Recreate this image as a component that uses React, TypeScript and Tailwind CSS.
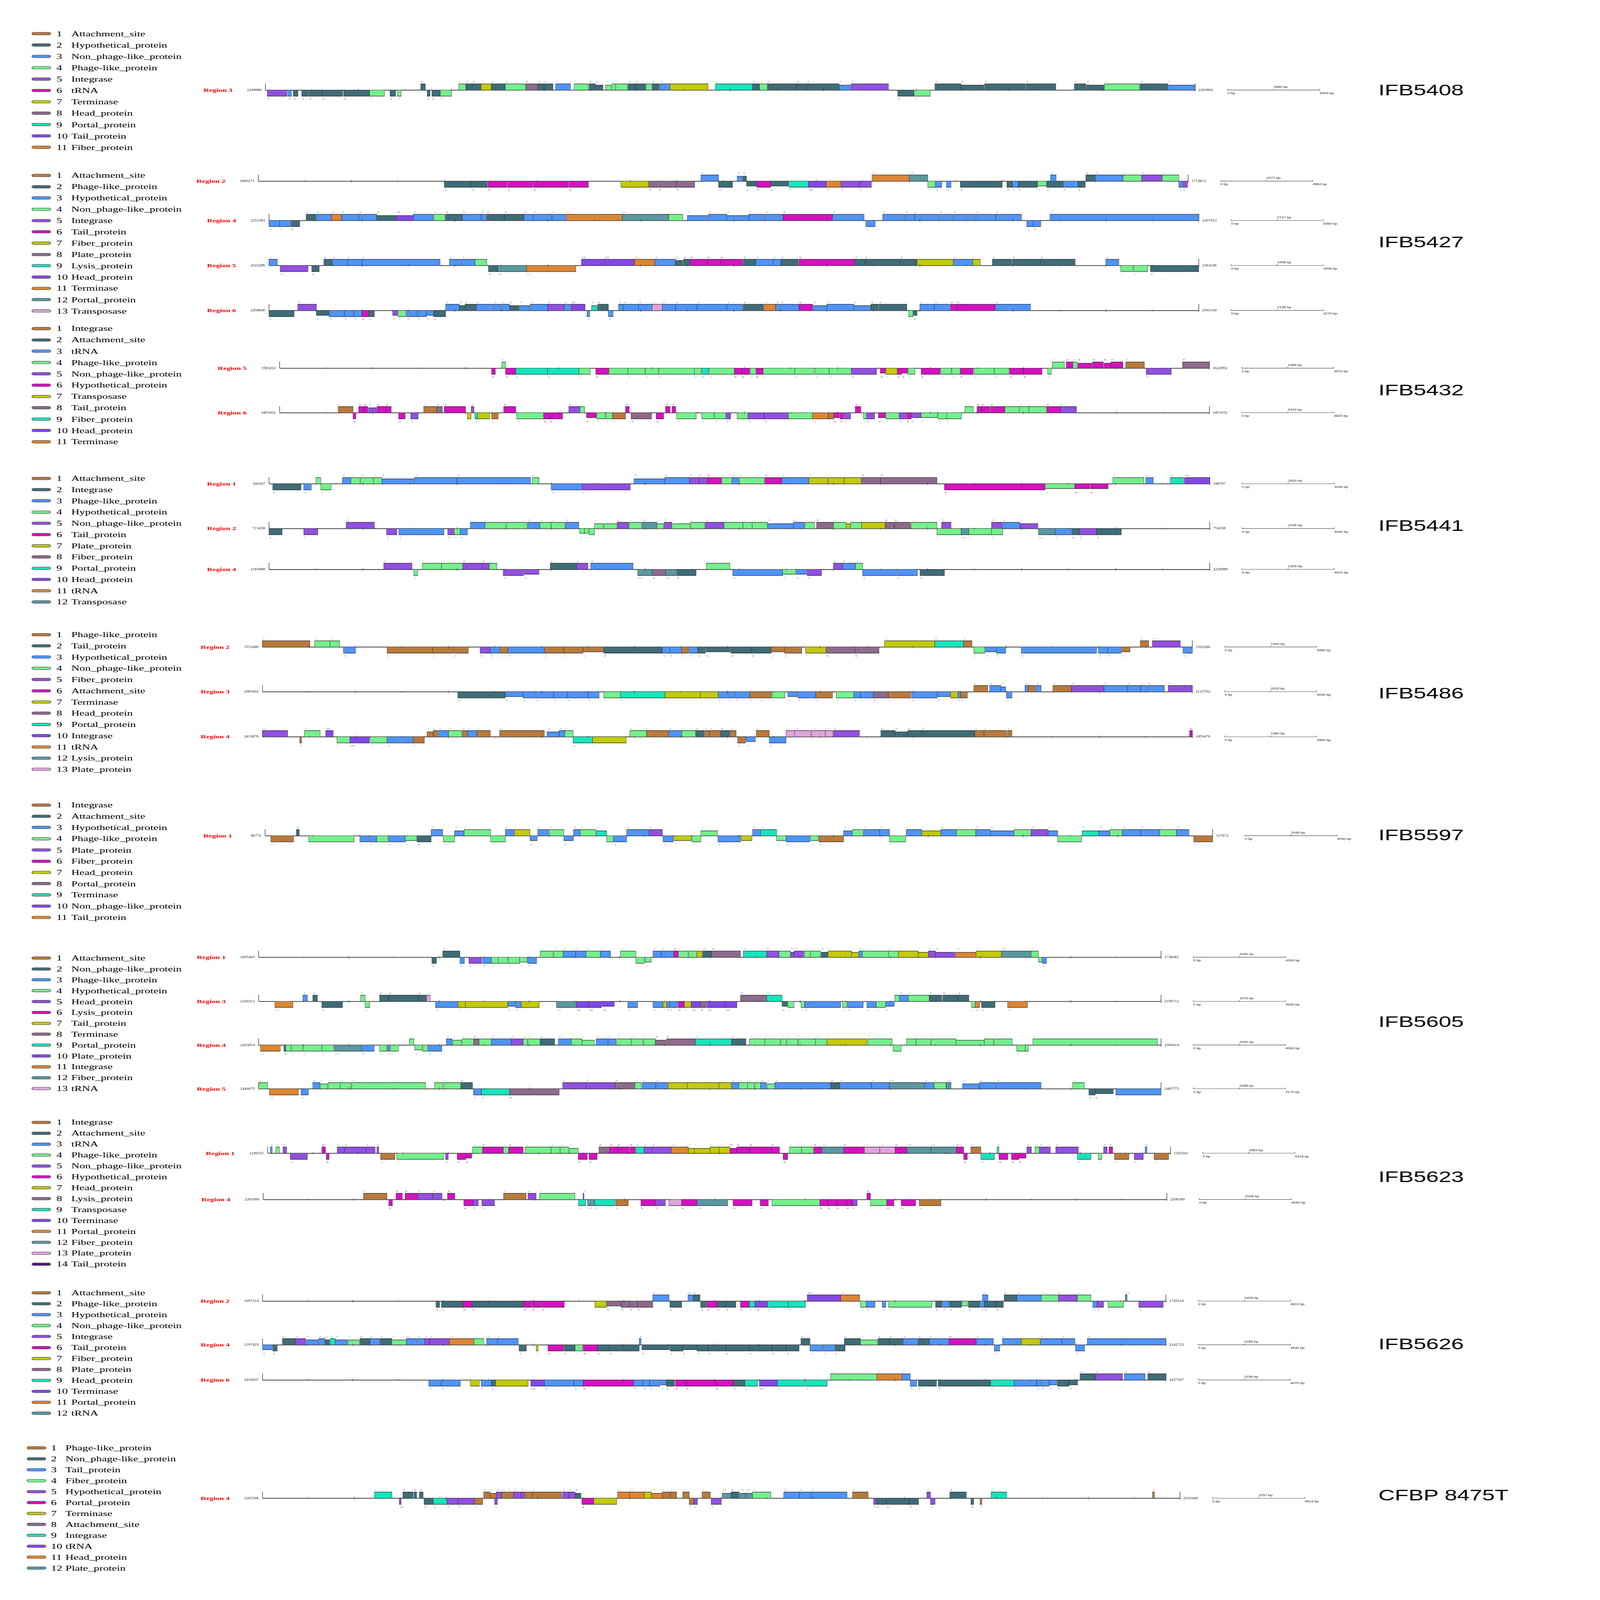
import React from 'react'

// category colours, index = legend number - 1
const HEX = [
  '#b87a3c', '#3f6c78', '#4f94f8', '#74f08c', '#9250e0', '#d412c0', '#c2ca0c',
  '#8e6a8c', '#18e4bc', '#8448e6', '#dc8634', '#5a98a2', '#e0a4dc', '#5a1a78',
]
const SWATCH = [
  'bg-[#b87a3c]', 'bg-[#3f6c78]', 'bg-[#4f94f8]', 'bg-[#74f08c]', 'bg-[#9250e0]', 'bg-[#d412c0]', 'bg-[#c2ca0c]',
  'bg-[#8e6a8c]', 'bg-[#18e4bc]', 'bg-[#8448e6]', 'bg-[#dc8634]', 'bg-[#5a98a2]', 'bg-[#e0a4dc]', 'bg-[#5a1a78]',
]

const SERIF = "'Liberation Serif', 'Times New Roman', serif"
const SANS = "'Liberation Sans', Arial, sans-serif"

// [from, to, strand, what] along the track (0..1).
// what = number: one gene of that category; strand 1 = above the line, 0 = below.
// what = "a,b,c": consecutive genes of those categories; strand = chance of being above.
type Ent = [number, number, number, number | string]

interface Region {
  name: string
  y: number
  s: number
  e: number
  c0: number
  len: number
  genes: Ent[]
}
interface Block {
  id: string
  top: number
  rowClass: string
  alt?: boolean
  nameY: number
  items: string[]
  regions: Region[]
}
interface Gene { x: number; w: number; top: boolean; cat: number; h: number }

const BLOCKS: Block[] = [
  {
    id: 'IFB5408', top: 128, rowClass: 'h-[52px]', nameY: 412,
    items: ['Attachment_site', 'Hypothetical_protein', 'Non_phage-like_protein', 'Phage-like_protein', 'Integrase', 'tRNA', 'Terminase', 'Head_protein', 'Portal_protein', 'Tail_protein', 'Fiber_protein'],
    regions: [
      { name: 'Region 3', y: 412, s: 823, e: 3706, c0: 2240686, len: 53006, genes: [
        [.002, .023, 0, 5], [.024, .028, 0, 3], [.03, .035, 0, 2], [.039, .061, 0, '2,2'], [.061, .083, 0, 2], [.084, .112, 0, 2],
        [.112, .128, 0, 4], [.134, .14, 0, 2], [.142, .146, 0, 4], [.167, .172, 1, 2], [.174, .177, 0, 2], [.179, .188, 0, 2],
        [.188, .2, 0, 4], [.208, .243, 1, '4,2,2,7'], [.243, .258, 1, 2], [.258, .28, 1, 4], [.28, .293, 1, 8], [.293, .31, 1, '2,2'],
        [.312, .328, 1, 3], [.332, .347, 1, 4], [.348, .363, 1, '2,2'], [.366, .39, 1, '4,4,4'], [.39, .435, 1, '2,2,4,2,3'],
        [.435, .476, 1, 7], [.484, .524, 1, 9], [.524, .54, 1, '2,4'], [.54, .63, 1, '2,2,2,3'], [.63, .67, 1, 5],
        [.68, .715, 0, '2,4'], [.72, .85, 1, '2,2,2,2'], [.87, 1, 1, '2,2,4,2,3'],
      ] },
    ],
  },
  {
    id: 'IFB5427', top: 777, rowClass: 'h-[51.7px]', nameY: 1107,
    items: ['Attachment_site', 'Phage-like_protein', 'Hypothetical_protein', 'Non_phage-like_protein', 'Integrase', 'Tail_protein', 'Fiber_protein', 'Plate_protein', 'Lysis_protein', 'Head_protein', 'Terminase', 'Portal_protein', 'Transposase'],
    regions: [
      { name: 'Region 2', y: 829, s: 801, e: 3684, c0: 1669271, len: 45542, genes: [
        [.2, .355, 0, '2,2,6,6,6,6'], [.39, .42, 0, 7], [.42, .47, 0, '8,8,8'], [.476, .495, 1, 3], [.495, .51, 0, 2],
        [.515, .525, 1, '3,2'], [.525, .66, 0, '2,6,2,9,10,11,5,5'], [.66, .70, 1, 11], [.70, .72, 1, 12],
        [.72, .735, 0, '4,3'], [.74, .745, 0, 3], [.755, .80, 0, 2], [.805, .89, 0, '2,3,2,4,2,3,2'], [.852, .858, 1, 3],
        [.89, .9, 1, 2], [.9, .93, 1, 3], [.93, .95, 1, 4], [.95, .972, 1, 5], [.972, .99, 1, 4], [.99, 1, 0, '3,5'],
      ] },
      { name: 'Region 4', y: 1009, s: 834, e: 3717, c0: 2253383, len: 54530, genes: [
        [0, .033, 0, '3,3,2'], [.04, .19, 1, '2,3,11,3,3,2,10,3,4'], [.19, .32, 1, '2,3,3,2,2,3,3,3'], [.32, .38, 1, 11],
        [.38, .43, 1, 12], [.43, .445, 1, 4], [.45, .553, 1, '3,3,3,3,3'], [.553, .606, 1, 6], [.606, .64, 1, 3],
        [.642, .652, 0, 3], [.66, .81, 1, '3,3,3,3,3,3,3'], [.815, .83, 0, '3,3'], [.84, 1, 1, 3],
      ] },
      { name: 'Region 5', y: 1215, s: 834, e: 3717, c0: 2323286, len: 39960, genes: [
        [0, .009, 1, 3], [.012, .042, 0, 5], [.046, .054, 0, 2], [.059, .068, 1, 2], [.068, .1, 1, '3,3'], [.1, .184, 1, 3],
        [.194, .235, 1, '3,3,4'], [.236, .246, 0, 2], [.246, .277, 0, 12], [.277, .33, 0, 11], [.336, .361, 1, 10],
        [.361, .393, 1, 10], [.393, .415, 1, 11], [.415, .453, 1, '3,2,2'], [.453, .51, 1, '6,6,6'], [.51, .57, 1, '2,3,3,2'],
        [.57, .63, 1, 6], [.63, .679, 1, '2,2'], [.679, .697, 1, 2], [.697, .736, 1, 7], [.736, .765, 1, '3,7'],
        [.778, .867, 1, '2,2,2'], [.90, .914, 1, 3], [.916, .945, 0, '4,4'], [.948, 1, 0, 2],
      ] },
      { name: 'Region 6', y: 1421, s: 834, e: 3717, c0: 2458840, len: 42700, genes: [
        [0, .027, 0, 2], [.031, .051, 1, 5], [.051, .114, 0, '2,3,3,3,6,2'], [.133, .19, 0, '5,4,3,3,3,2'],
        [.19, .34, 1, '3,2,2,3,3,3,2,3,3,5,3,10'], [.342, .345, 0, 3], [.347, .365, 1, '9,2'], [.365, .37, 0, 3],
        [.376, .412, 1, '3,3,3'], [.412, .423, 1, 13], [.423, .51, 1, '3,3,3,3'], [.51, .545, 1, '2,11'],
        [.545, .6, 1, '3,3,6,3'], [.6, .686, 1, '3,3,2,2'], [.688, .697, 0, '4,2'], [.70, .733, 1, '3,3'],
        [.733, .74, 1, 6], [.74, .781, 1, 6], [.781, .819, 1, 3],
      ] },
    ],
  },
  {
    id: 'IFB5432', top: 1478, rowClass: 'h-[51.8px]', nameY: 1784,
    items: ['Integrase', 'Attachment_site', 'tRNA', 'Phage-like_protein', 'Non_phage-like_protein', 'Hypothetical_protein', 'Transposase', 'Tail_protein', 'Fiber_protein', 'Head_protein', 'Terminase'],
    regions: [
      { name: 'Region 5', y: 1685, s: 867, e: 3750, c0: 1583202, len: 39700, genes: [
        [.228, .232, 0, 6], [.239, .243, 1, 4], [.243, .254, 0, 6], [.254, .288, 0, 9], [.288, .322, 0, 9], [.322, .334, 0, 4],
        [.34, .354, 0, 6], [.354, .408, 0, '4,4,4'], [.408, .446, 0, 4], [.446, .462, 0, '4,9'], [.462, .489, 0, 4],
        [.489, .52, 0, '6,6,4,6'], [.52, .554, 0, 4], [.554, .575, 0, 4], [.576, .591, 0, 4], [.591, .615, 0, 4],
        [.615, .642, 0, 5], [.646, .684, 0, '6,7,6,6,4'], [.69, .732, 0, '6,4,4'], [.732, .746, 0, 6], [.747, .785, 0, '4,4'],
        [.785, .8, 0, 6], [.8, .82, 0, 6], [.826, .83, 0, 4], [.831, .844, 1, 4], [.846, .894, 1, '6,4,6,6,6'],
        [.894, .907, 1, 6], [.91, .93, 1, 1], [.932, .959, 0, 5], [.971, 1, 1, 8],
      ] },
      { name: 'Region 6', y: 1889, s: 867, e: 3750, c0: 3403452, len: 48200, genes: [
        [.063, .079, 1, 1], [.085, .12, 1, '6,6,5,6,6'], [.079, .082, 0, 6], [.128, .135, 0, 6], [.141, .149, 0, 5],
        [.155, .169, 1, 1], [.169, .175, 1, 8], [.177, .2, 1, 6], [.206, .209, 1, 5], [.202, .206, 0, 7], [.21, .213, 0, 9],
        [.213, .226, 0, 7], [.228, .235, 0, 1], [.241, .254, 1, 6], [.255, .284, 0, 4], [.284, .305, 0, '6,6'],
        [.311, .323, 1, 5], [.323, .328, 1, 4], [.33, .358, 0, '6,4,4'], [.358, .372, 0, 1], [.372, .376, 1, 6],
        [.378, .4, 0, 8], [.405, .413, 0, 6], [.415, .42, 1, 6], [.422, .426, 1, 6], [.427, .448, 0, 4],
        [.454, .485, 0, '4,4,5'], [.492, .521, 0, '4,5'], [.521, .547, 0, 5], [.547, .573, 0, 4], [.573, .59, 0, 11],
        [.59, .596, 0, 1], [.596, .614, 0, '6,6,5'], [.619, .625, 1, 6], [.628, .64, 0, '4,5'], [.644, .69, 0, '6,4,5,6,5'],
        [.69, .734, 0, '4,4,4'], [.737, .746, 1, 4], [.75, .78, 1, '6,6,6'], [.78, .825, 1, '4,4,4'], [.825, .84, 1, 6],
        [.84, .857, 1, 5],
      ] },
    ],
  },
  {
    id: 'IFB5441', top: 2164, rowClass: 'h-[51.4px]', nameY: 2405,
    items: ['Attachment_site', 'Integrase', 'Phage-like_protein', 'Hypothetical_protein', 'Non_phage-like_protein', 'Tail_protein', 'Plate_protein', 'Fiber_protein', 'Portal_protein', 'Head_protein', 'tRNA', 'Transposase'],
    regions: [
      { name: 'Region 1', y: 2214, s: 834, e: 3751, c0: 166307, len: 32400, genes: [
        [.004, .034, 0, 2], [.037, .045, 0, 3], [.05, .055, 1, 4], [.055, .066, 0, 4], [.078, .12, 1, '3,4,4,4'],
        [.12, .2, 1, '3,3'], [.2, .278, 1, 3], [.28, .287, 1, 4], [.30, .333, 0, 3], [.333, .384, 0, 5], [.388, .447, 1, '3,3'],
        [.447, .5, 1, '5,5,6,4,3'], [.5, .574, 1, '4,6,3'], [.574, .63, 1, '7,7,7'], [.63, .65, 1, 8], [.65, .71, 1, 8],
        [.718, .825, 0, 6], [.825, .892, 0, '4,6,6'], [.897, .93, 1, 4], [.932, .94, 1, 3], [.958, .972, 1, 9], [.973, 1, 1, 10],
      ] },
      { name: 'Region 2', y: 2419, s: 834, e: 3751, c0: 713458, len: 40900, genes: [
        [0, .014, 0, 2], [.037, .052, 0, 5], [.082, .112, 1, 5], [.125, .136, 0, 5], [.138, .186, 0, 3], [.19, .211, 0, '5,4,3'],
        [.214, .33, 1, '3,4,4,3,4,4,3'], [.33, .346, 0, '4,4,4'], [.346, .42, 1, '4,4,5,4,12,4'], [.42, .53, 1, '5,4,4,5,4,4,4'],
        [.53, .58, 1, '3,3,4'], [.582, .6, 1, 8], [.6, .63, 1, '4,7,4'], [.63, .655, 1, 7], [.655, .71, 1, '8,8,4'],
        [.71, .78, 0, '4,12,4,4'], [.715, .725, 1, 5], [.768, .818, 1, '5,3,5'], [.818, .906, 0, '12,3,2,5,2'],
      ] },
      { name: 'Region 4', y: 2606, s: 834, e: 3751, c0: 2183888, len: 46100, genes: [
        [.122, .152, 1, 5], [.154, .158, 0, 4], [.163, .243, 1, '4,4,5,5,4'], [.249, .287, 0, '5,5'], [.299, .327, 1, 2],
        [.327, .339, 1, 5], [.342, .387, 1, 3], [.392, .454, 0, '12,8,12,2'], [.465, .49, 1, 4], [.493, .546, 0, 3],
        [.546, .588, 0, '4,3,5'], [.6, .631, 1, '5,3,4'], [.631, .69, 0, '3,3'], [.692, .718, 0, 2],
      ] },
    ],
  },
  {
    id: 'IFB5486', top: 2879, rowClass: 'h-[51.4px]', nameY: 3171,
    items: ['Phage-like_protein', 'Tail_protein', 'Hypothetical_protein', 'Non_phage-like_protein', 'Fiber_protein', 'Attachment_site', 'Terminase', 'Head_protein', 'Portal_protein', 'Integrase', 'tRNA', 'Lysis_protein', 'Plate_protein'],
    regions: [
      { name: 'Region 2', y: 2961, s: 814, e: 3697, c0: 1553480, len: 39800, genes: [
        [0, .051, 1, 1], [.056, .083, 1, '4,4'], [.087, .1, 0, 3], [.134, .183, 0, 1], [.183, .222, 0, '1,1'], [.234, .245, 0, 5],
        [.245, .264, 0, '3,1'], [.264, .303, 0, 3], [.303, .367, 0, '1,1,1'], [.367, .43, 0, 2], [.43, .477, 0, '3,3,1,3,2'],
        [.477, .526, 0, '2,2'], [.526, .547, 0, 2], [.547, .58, 0, '1,1'], [.584, .606, 0, 7], [.606, .637, 0, 8],
        [.637, .663, 0, 8], [.669, .723, 1, 7], [.723, .754, 1, 9], [.754, .763, 1, 1], [.765, .8, 0, '4,3,3'],
        [.816, .897, 0, 3], [.899, .933, 0, '3,3,1'], [.944, .953, 1, 1], [.957, .987, 1, 5], [.99, 1, 0, 3],
      ] },
      { name: 'Region 3', y: 3166, s: 814, e: 3697, c0: 2085402, len: 40300, genes: [
        [.21, .261, 0, 2], [.261, .362, 0, '3,3,3,3,3,3'], [.367, .385, 0, 4], [.385, .433, 0, 9], [.433, .471, 0, 7],
        [.471, .49, 0, 7], [.49, .535, 0, '3,3,3,1'], [.535, .562, 0, '1,4'], [.565, .595, 0, '3,3'], [.595, .613, 0, 1],
        [.617, .636, 0, 4], [.636, .657, 0, '3,3'], [.657, .673, 0, 8], [.673, .697, 0, 1], [.698, .74, 0, '3,3'],
        [.74, .758, 0, '7,3,1'], [.765, .78, 1, 1], [.782, .8, 1, '3,3'], [.8, .806, 0, 3], [.82, .838, 1, '3,1,3'],
        [.85, .87, 1, 1], [.87, .905, 1, 5], [.905, .93, 1, 3], [.93, .97, 1, '3,3,3'], [.974, 1, 1, 5],
      ] },
      { name: 'Region 4', y: 3372, s: 814, e: 3697, c0: 2419876, len: 39600, genes: [
        [0, .027, 1, 5], [.04, .042, 0, 1], [.045, .062, 1, 4], [.068, .076, 1, 10], [.08, .094, 0, 4], [.094, .115, 0, 10],
        [.116, .134, 0, 4], [.134, .162, 0, 3], [.162, .174, 0, 1], [.177, .2, 1, '1,1,3'], [.2, .245, 1, '4,1,3,1'],
        [.255, .303, 1, 1], [.306, .334, 1, '3,3,4'], [.334, .355, 0, 9], [.355, .391, 0, 7], [.395, .413, 1, 4],
        [.413, .437, 1, 1], [.437, .451, 1, 3], [.451, .51, 1, '4,2,1,1,2,1'], [.511, .53, 0, '1,3'], [.545, .563, 0, 3],
        [.531, .545, 1, 1], [.563, .614, 1, '13,13,13,13'], [.614, .642, 1, 5], [.665, .709, 1, '2,2,2'], [.709, .766, 1, 2],
        [.766, .776, 1, 1], [.776, .8, 1, 1], [.801, .806, 1, 1], [.997, 1, 1, 6],
      ] },
    ],
  },
  {
    id: 'IFB5597', top: 3659, rowClass: 'h-[51.4px]', nameY: 3820,
    items: ['Integrase', 'Attachment_site', 'Hypothetical_protein', 'Phage-like_protein', 'Plate_protein', 'Fiber_protein', 'Head_protein', 'Portal_protein', 'Terminase', 'Non_phage-like_protein', 'Tail_protein'],
    regions: [
      { name: 'Region 1', y: 3825, s: 822, e: 3760, c0: 86772, len: 40900, genes: [
        [.006, .03, 0, 1], [.033, .036, 1, 2], [.046, .094, 0, 4], [.1, .2, 0.3, '3,3,4,3,4,2,3,4'], [.2, .3, 0.4, '3,4,4,3,7,3,3'],
        [.3, .42, 0.5, '4,3,3,4,9,4,3,3,5'], [.42, .55, 0.6, '3,7,4,4,3,7,3,9,4'], [.55, .62, 0.2, '3,4,1,3'],
        [.62, .75, 0.85, '4,3,3,4,3,7,3,4'], [.75, .88, 0.8, '3,3,4,5,3,4,9'], [.88, .975, 0.8, '3,4,3,3,4,3'], [.98, 1, 0, 1],
      ] },
    ],
  },
  {
    id: 'IFB5605', top: 4360, rowClass: 'h-[49.8px]', nameY: 4675,
    items: ['Attachment_site', 'Non_phage-like_protein', 'Phage-like_protein', 'Hypothetical_protein', 'Head_protein', 'Lysis_protein', 'Tail_protein', 'Terminase', 'Portal_protein', 'Plate_protein', 'Integrase', 'Fiber_protein', 'tRNA'],
    regions: [
      { name: 'Region 1', y: 4381, s: 802, e: 3600, c0: 1695465, len: 43000, genes: [
        [.192, .197, 0, 2], [.204, .223, 1, 2], [.223, .228, 0, 3], [.233, .247, 0, 5], [.248, .298, 0, '3,4,4,4,4'],
        [.298, .308, 0, 3], [.312, .39, 1, '4,4,3,3,4,3'], [.401, .418, 1, 4], [.418, .435, 0, '4,4'], [.437, .46, 1, '3,3'],
        [.46, .486, 1, '6,4,4'], [.486, .502, 1, '7,2'], [.502, .534, 1, 8], [.537, .563, 1, 9], [.563, .631, 1, '5,4,5,5,4,4,2'],
        [.631, .657, 1, 7], [.657, .669, 1, '7,3'], [.669, .698, 1, 4], [.698, .709, 1, 4], [.709, .731, 1, 7],
        [.731, .75, 1, '7,5'], [.75, .795, 1, '5,11'], [.795, .823, 1, 7], [.823, .856, 1, 12], [.856, .864, 1, 4],
        [.864, .873, 0, '4,3'],
      ] },
      { name: 'Region 3', y: 4583, s: 802, e: 3600, c0: 2160312, len: 39400, genes: [
        [.018, .038, 0, 11], [.049, .054, 1, 3], [.06, .065, 1, 2], [.07, .093, 0, 2], [.113, .118, 1, 4], [.118, .123, 0, 4],
        [.134, .144, 1, 2], [.144, .177, 1, 2], [.177, .186, 1, 2], [.186, .19, 1, 13], [.196, .221, 0, 3], [.221, .229, 0, 7],
        [.229, .276, 0, 7], [.276, .291, 0, '3,3'], [.291, .311, 0, 7], [.33, .352, 0, 12], [.352, .394, 0, '10,10,10'],
        [.409, .42, 0, 3], [.437, .497, 0, '3,7,3,3,6,7,10,8'], [.497, .517, 0, 10], [.517, .53, 0, 10], [.534, .563, 1, 8],
        [.563, .58, 1, 9], [.58, .594, 0, '2,4'], [.601, .605, 0, 4], [.605, .645, 0, 3], [.647, .67, 0, '4,3'],
        [.674, .705, 0, '3,4,3'], [.705, .71, 1, 4], [.71, .72, 1, 3], [.72, .743, 1, 4], [.743, .757, 1, 2],
        [.758, .775, 1, 2], [.775, .787, 1, 2], [.79, .794, 0, 4], [.794, .799, 0, 11], [.801, .816, 0, 2], [.83, .852, 0, 11],
      ] },
      { name: 'Region 4', y: 4783, s: 802, e: 3600, c0: 2263814, len: 40600, genes: [
        [.002, .024, 0, 11], [.028, .03, 0, 2], [.03, .084, 0, '4,4,4,4'], [.084, .114, 0, 12], [.114, .128, 0, 3],
        [.134, .155, 0, '4,3,4'], [.167, .172, 1, 4], [.173, .188, 0, '4,4'], [.188, .203, 0, 3], [.208, .258, 1, '3,4,4,8,4'],
        [.258, .28, 1, 3], [.28, .293, 1, 5], [.293, .312, 1, '4,4'], [.312, .328, 1, 2], [.332, .372, 1, '3,4,4'],
        [.374, .396, 1, '3,3'], [.397, .452, 1, '4,4,4,8'], [.452, .484, 1, 8], [.484, .524, 1, 9], [.524, .54, 1, 2],
        [.544, .63, 1, '4,4,4,4,4,4'], [.63, .674, 1, 7], [.675, .702, 1, 4], [.703, .712, 0, 4], [.718, .815, 1, '4,4,4,4,4'],
        [.815, .835, 1, 4], [.84, .853, 0, '4,4'], [.858, .996, 1, 4],
      ] },
      { name: 'Region 5', y: 4983, s: 802, e: 3600, c0: 2444075, len: 41700, genes: [
        [0, .01, 1, 4], [.012, .044, 0, 11], [.047, .055, 0, 3], [.06, .068, 1, 3], [.068, .103, 1, '4,4,4'], [.103, .185, 1, 4],
        [.195, .204, 1, 4], [.205, .224, 1, 4], [.224, .237, 1, 2], [.238, .247, 0, 3], [.247, .278, 0, 9], [.278, .333, 0, 8],
        [.337, .363, 1, 5], [.363, .395, 1, 5], [.395, .417, 1, 8], [.417, .424, 1, 4], [.425, .454, 1, '3,3'], [.454, .475, 1, 7],
        [.475, .51, 1, 7], [.51, .524, 1, 7], [.524, .572, 1, '3,4,4,4,3,4'], [.572, .634, 1, 3], [.634, .644, 1, 2],
        [.644, .679, 1, 3], [.679, .699, 1, 3], [.699, .738, 1, 12], [.738, .768, 1, '3,4,12'], [.78, .818, 1, '3,3'],
        [.818, .867, 1, 3], [.902, .915, 1, 4], [.92, .947, 0, '2,2'], [.95, 1, 0, 3],
      ] },
    ],
  },
  {
    id: 'IFB5623', top: 5112, rowClass: 'h-[49.9px]', nameY: 5385,
    items: ['Integrase', 'Attachment_site', 'tRNA', 'Phage-like_protein', 'Non_phage-like_protein', 'Hypothetical_protein', 'Head_protein', 'Lysis_protein', 'Transposase', 'Terminase', 'Portal_protein', 'Fiber_protein', 'Plate_protein', 'Tail_protein'],
    regions: [
      { name: 'Region 1', y: 5278, s: 830, e: 3629, c0: 1249331, len: 53170, genes: [
        [.003, .005, 1, 3], [.009, .013, 1, 4], [.017, .021, 1, 5], [.025, .044, 0, 5], [.06, .064, 1, 6], [.065, .068, 0, 6],
        [.077, .085, 1, 5], [.085, .109, 1, 5], [.109, .119, 1, 5], [.121, .123, 1, 5], [.125, .141, 0, 1], [.143, .195, 0, 4],
        [.197, .2, 0, 5], [.21, .226, 0, '6,6'], [.227, .238, 1, 4], [.238, .261, 1, 6], [.261, .267, 1, 4], [.267, .283, 1, 6],
        [.285, .314, 1, 4], [.314, .344, 1, '4,4,4'], [.344, .354, 0, 6], [.356, .365, 0, 6], [.367, .379, 1, 8],
        [.379, .408, 1, '6,6,6'], [.408, .417, 1, 9], [.417, .426, 1, 5], [.426, .447, 1, 5], [.447, .466, 1, 11],
        [.466, .5, 1, '7,7,7'], [.5, .512, 1, 7], [.512, .534, 1, '6,6'], [.534, .558, 1, 6], [.558, .567, 1, 6],
        [.571, .576, 0, 6], [.578, .605, 1, '4,4'], [.605, .614, 1, 6], [.614, .638, 1, 12], [.638, .661, 1, 6],
        [.661, .678, 1, 13], [.678, .695, 1, 13], [.695, .708, 1, 6], [.708, .735, 1, 12], [.735, .763, 1, 12],
        [.763, .771, 1, 6], [.771, .775, 0, 6], [.779, .79, 1, 1], [.79, .805, 0, 9], [.808, .81, 1, 9], [.81, .82, 0, 6],
        [.824, .84, 0, '6,6'], [.841, .846, 1, 5], [.85, .855, 1, 4], [.855, .867, 1, 5], [.873, .898, 1, 5],
        [.897, .912, 0, 9], [.92, .924, 0, 4], [.926, .93, 1, 5], [.932, .936, 1, 6], [.938, .954, 0, 1], [.96, .97, 0, 5],
        [.972, .974, 1, 3], [.982, .998, 0, 1],
      ] },
      { name: 'Region 4', y: 5490, s: 816, e: 3618, c0: 2265490, len: 40900, genes: [
        [.111, .137, 1, 1], [.139, .143, 0, 6], [.147, .154, 1, 6], [.157, .171, 1, 6], [.171, .188, 1, 5], [.188, .198, 1, 5],
        [.204, .212, 1, 6], [.222, .232, 0, 6], [.232, .238, 0, 5], [.242, .256, 0, 5], [.266, .291, 1, 1], [.293, .302, 1, 5],
        [.306, .345, 1, 4], [.354, .355, 1, 5], [.349, .357, 0, 9], [.359, .367, 0, 12], [.367, .389, 0, 9], [.39, .404, 0, 1],
        [.418, .434, 0, 6], [.434, .445, 0, 5], [.449, .463, 0, 13], [.463, .48, 0, 6], [.48, .514, 0, 12], [.52, .541, 0, 6],
        [.55, .559, 0, 6], [.563, .616, 0, 4], [.616, .658, 0, '6,6,6,6,5'], [.668, .672, 1, 6], [.672, .69, 0, 4],
        [.69, .698, 0, 6], [.706, .722, 0, 6], [.726, .75, 0, 1],
      ] },
    ],
  },
  {
    id: 'IFB5626', top: 5892, rowClass: 'h-[50.1px]', nameY: 6150,
    items: ['Attachment_site', 'Phage-like_protein', 'Hypothetical_protein', 'Non_phage-like_protein', 'Integrase', 'Tail_protein', 'Fiber_protein', 'Plate_protein', 'Head_protein', 'Terminase', 'Portal_protein', 'tRNA'],
    regions: [
      { name: 'Region 2', y: 5955, s: 814, e: 3615, c0: 1697214, len: 48100, genes: [
        [.192, .196, 0, 2], [.198, .222, 0, 2], [.222, .232, 0, 6], [.232, .289, 0, 2], [.289, .309, 0, '6,6'], [.309, .334, 0, 6],
        [.368, .381, 0, 7], [.381, .432, 0, '8,8,8,8'], [.432, .45, 1, 3], [.451, .464, 0, 2], [.471, .485, 1, '3,2'],
        [.485, .524, 0, '2,6,2,2'], [.529, .545, 0, '6,9'], [.545, .559, 0, 10], [.559, .582, 0, 9], [.582, .601, 0, 9],
        [.603, .64, 1, 10], [.64, .661, 1, 11], [.662, .678, 0, '4,3'], [.686, .69, 0, 3], [.693, .741, 0, 4],
        [.745, .82, 0, '2,3,2,4,2,3,2,2'], [.797, .803, 1, 3], [.821, .835, 1, 2], [.835, .862, 1, 3], [.862, .881, 1, 4],
        [.881, .902, 1, 5], [.902, .917, 1, 4], [.955, .957, 1, 12], [.919, .931, 0, '3,5'], [.936, .953, 0, 4], [.97, .997, 0, 5],
      ] },
      { name: 'Region 4', y: 6155, s: 814, e: 3615, c0: 2197423, len: 45300, genes: [
        [0, .017, 0, '3,2'], [.022, .075, 1, '2,5,3,3,2'], [.075, .13, 1, '9,3,4,2,3'], [.13, .185, 1, '2,4,3,3,5'],
        [.185, .207, 1, 5], [.207, .234, 1, 11], [.234, .245, 1, 4], [.248, .26, 1, 3], [.26, .283, 1, 3], [.284, .292, 0, 2],
        [.303, .305, 0, 7], [.316, .355, 0, '6,2,4'], [.355, .371, 0, 6], [.371, .384, 0, 2], [.384, .417, 0, 2],
        [.42, .58, 0, '2,2,2,2,2,2,2,2'], [.58, .594, 0, 2], [.417, .419, 1, 3], [.596, .606, 1, 2], [.606, .645, 0, '3,3,2'],
        [.644, .694, 1, '2,4,2'], [.694, .709, 1, 2], [.709, .726, 1, 3], [.726, .738, 1, 2], [.738, .76, 1, 3], [.76, .79, 1, 6],
        [.79, .809, 1, 3], [.81, .816, 0, 3], [.819, .84, 1, 3], [.84, .861, 1, 7], [.861, .9, 1, '3,3'], [.9, .91, 0, 3],
        [.913, 1, 1, 3],
      ] },
      { name: 'Region 6', y: 6316, s: 814, e: 3615, c0: 2416697, len: 40700, genes: [
        [.184, .198, 0, 3], [.198, .219, 0, 3], [.23, .24, 0, 7], [.242, .258, 0, '3,2'], [.258, .294, 0, 7], [.297, .312, 0, 10],
        [.312, .345, 0, 3], [.345, .355, 0, 3], [.355, .411, 0, 6], [.411, .447, 0, '3,3,3,3'], [.447, .456, 0, 2],
        [.457, .469, 0, 6], [.469, .502, 0, 6], [.502, .521, 0, 6], [.521, .534, 0, 2], [.534, .548, 0, 9], [.55, .57, 0, 10],
        [.57, .6, 0, 9], [.601, .625, 0, 9], [.629, .68, 1, 4], [.68, .708, 1, 11], [.708, .717, 1, 3], [.717, .724, 0, 3],
        [.726, .746, 0, 2], [.748, .806, 0, 2], [.806, .832, 0, 9], [.832, .857, 0, 3], [.857, .88, 0, '3,3,3'],
        [.88, .903, 0, '2,2'], [.905, .922, 1, 2], [.922, .952, 1, 5], [.954, .977, 1, 3], [.98, 1, 1, 2],
      ] },
    ],
  },
  {
    id: 'CFBP 8475T', top: 6602, rowClass: 'h-[50px]', alt: true, nameY: 6842,
    items: ['Phage-like_protein', 'Non_phage-like_protein', 'Tail_protein', 'Fiber_protein', 'Hypothetical_protein', 'Portal_protein', 'Terminase', 'Attachment_site', 'Integrase', 'tRNA', 'Head_protein', 'Plate_protein'],
    regions: [
      { name: 'Region 4', y: 6857, s: 814, e: 3659, c0: 2265306, len: 45140, genes: [
        [.122, .141, 1, 9], [.149, .151, 0, 10], [.153, .164, 1, 2], [.165, .168, 1, 2], [.171, .175, 1, 2], [.176, .186, 0, 2],
        [.186, .201, 0, 9], [.201, .213, 0, 5], [.213, .231, 0, 5], [.231, .24, 0, 1], [.241, .248, 1, 1],
        [.248, .294, 1, '1,5,1,1,5,5,1'], [.253, .256, 0, 5], [.294, .326, 1, 1], [.327, .347, 1, '5,5,2'], [.348, .361, 0, 6],
        [.361, .386, 0, 7], [.387, .4, 1, 11], [.4, .416, 1, 11], [.416, .452, 1, '7,11,1,1'], [.458, .465, 1, 1],
        [.479, .488, 1, 1], [.465, .47, 0, 1], [.47, .474, 0, 5], [.489, .5, 0, 5], [.501, .534, 1, '12,2,12,12'],
        [.534, .554, 1, 4], [.568, .585, 1, 3], [.585, .598, 1, 3], [.598, .637, 1, 3], [.643, .66, 1, 1], [.666, .669, 0, 5],
        [.669, .68, 0, 2], [.68, .705, 0, 2], [.705, .715, 0, 2], [.724, .728, 1, 5], [.728, .733, 0, 5], [.749, .767, 1, 2],
        [.772, .775, 0, 2], [.782, .784, 0, 1], [.794, .811, 1, 9], [.97, .972, 1, 1],
      ] },
    ],
  },
]

function mulberry32(a: number) {
  return () => {
    a |= 0
    a = (a + 0x6d2b79f5) | 0
    let t = Math.imul(a ^ (a >>> 15), 1 | a)
    t = (t + Math.imul(t ^ (t >>> 7), 61 | t)) ^ t
    return ((t ^ (t >>> 14)) >>> 0) / 4294967296
  }
}

function buildGenes(r: Region): Gene[] {
  const rnd = mulberry32(r.c0)
  const W = r.e - r.s
  const out: Gene[] = []
  for (const [a, b, p, what] of r.genes) {
    const x0 = r.s + a * W
    const x1 = r.s + b * W
    if (typeof what === 'number') {
      out.push({ x: x0, w: Math.max(x1 - x0, 2), top: p >= 0.5, cat: what, h: 29 })
      continue
    }
    const cats = what.split(',').map(Number)
    const parts = cats.map(() => 0.35 + rnd())
    const sum = parts.reduce((s, v) => s + v, 0)
    let x = x0
    cats.forEach((cat, i) => {
      const w = ((x1 - x0) * parts[i]) / sum
      const top = p === 1 ? true : p === 0 ? false : rnd() < p
      out.push({ x, w: Math.max(w - (rnd() < 0.35 ? 2 : 0), 2), top, cat, h: rnd() < 0.2 ? 23 : 29 })
      x += w
    })
  }
  return out
}

function Track({ r, top }: { r: Region; top: number }) {
  const Y = r.y - top
  const W = r.e - r.s
  const genes = buildGenes(r)
  const sb = r.e + 100
  const half = Math.round(r.len / 20)
  return (
    <g>
      <text x={r.s - 102} y={Y} textAnchor="end" dominantBaseline="central" fontFamily={SERIF} fontWeight={700} fontSize={24} fill="#ff0000">
        {r.name}
      </text>
      <text x={r.s - 12} y={Y} textAnchor="end" dominantBaseline="central" fontFamily={SERIF} fontSize={13} fill="#222">
        {r.c0}
      </text>
      <rect x={r.s} y={Y - 1} width={W} height={4} fill="#9a9a9a" />
      <line x1={r.s} x2={r.e} y1={Y} y2={Y} stroke="#111" strokeWidth={1.8} />
      <line x1={r.s} x2={r.s} y1={Y - 30} y2={Y} stroke="#222" strokeWidth={1.5} />
      <line x1={r.e} x2={r.e} y1={Y - 30} y2={Y + 6} stroke="#222" strokeWidth={1.5} />
      <text x={r.e + 10} y={Y} dominantBaseline="central" fontFamily={SERIF} fontSize={13} fill="#222">
        {r.c0 + r.len}
      </text>

      {genes.map((g, i) => {
        const y0 = g.top ? Y - g.h : Y
        return (
          <g key={i}>
            <rect x={g.x} y={y0} width={g.w} height={g.h} fill={HEX[g.cat - 1]} stroke="#2a2a2a" strokeOpacity={0.75} strokeWidth={1.2} />
            <rect x={g.x} y={g.top ? y0 : Y + g.h - 3} width={g.w} height={3} fill="#333" opacity={0.55} />
            <text x={g.x + 1} y={g.top ? Y - 34 : Y + 44} fontFamily={SERIF} fontSize={12} fill={HEX[g.cat - 1]}>
              {g.cat}
            </text>
          </g>
        )
      })}

      {Array.from({ length: 19 }, (_, i) => {
        const x = r.s + ((i + 1) * W) / 20
        const d = i % 2 ? 7 : 4
        return <line key={i} x1={x} x2={x} y1={Y - d} y2={Y + d} stroke="#333" strokeWidth={1.2} />
      })}

      {/* scale bar */}
      <line x1={sb} x2={sb + 286} y1={Y} y2={Y} stroke="#222" strokeWidth={1.6} />
      <line x1={sb} x2={sb} y1={Y - 5} y2={Y} stroke="#222" strokeWidth={1.4} />
      <line x1={sb + 143} x2={sb + 143} y1={Y - 5} y2={Y} stroke="#222" strokeWidth={1.4} />
      <line x1={sb + 286} x2={sb + 286} y1={Y - 5} y2={Y} stroke="#222" strokeWidth={1.4} />
      <text x={sb + 143} y={Y - 10} fontFamily={SANS} fontSize={12} fill="#222">{half} bp</text>
      <text x={sb} y={Y + 19} fontFamily={SANS} fontSize={12} fill="#222">0 bp</text>
      <text x={sb + 286} y={Y + 19} fontFamily={SANS} fontSize={12} fill="#222">{half * 2} bp</text>
    </g>
  )
}

function Legend({ b }: { b: Block }) {
  return (
    <div className="w-[580px] shrink-0">
      {b.items.map((t, i) => (
        <div key={t} className={`flex items-center ${b.rowClass}`}>
          <span className={`${b.alt ? 'ml-[83px]' : 'ml-[98px]'} h-[14px] w-[60px] shrink-0 rounded-full border-2 border-[#4d4d4d] ${SWATCH[i]}`} />
          <span className={`${b.alt ? 'ml-[15px] w-[45px]' : 'ml-[17px] w-[46px]'} shrink-0 text-[35px] leading-none`}>{i + 1}</span>
          <span className="whitespace-nowrap text-[35px] leading-none">{t}</span>
        </div>
      ))}
    </div>
  )
}

export default function App() {
  // the figure is laid out on a 4961 x 7323 sheet; stretch that sheet onto the actual window
  const sx = window.innerWidth / 4961
  const sy = window.innerHeight / 7323
  return (
    <div className="h-screen w-screen overflow-hidden bg-white">
      <div
        style={{ transform: `scale(${sx}, ${sy})` }}
        className="h-[7323px] w-[4961px] origin-top-left bg-white pt-[128px] font-['Liberation_Serif','Times_New_Roman',serif] text-black"
      >
        {BLOCKS.map((b, bi) => {
          const next = bi + 1 < BLOCKS.length ? BLOCKS[bi + 1].top : 7323
          const h = next - b.top
          return (
            <section key={b.id} className="flex items-start">
              <Legend b={b} />
              <svg width={4381} height={h} viewBox={`580 0 4381 ${h}`} overflow="visible" className="block shrink-0">
                {b.regions.map(r => (
                  <Track key={r.name} r={r} top={b.top} />
                ))}
                <text x={4274} y={b.nameY - b.top} dominantBaseline="central" fontFamily={SANS} fontSize={70} fill="#000">
                  {b.id}
                </text>
              </svg>
            </section>
          )
        })}
      </div>
    </div>
  )
}
